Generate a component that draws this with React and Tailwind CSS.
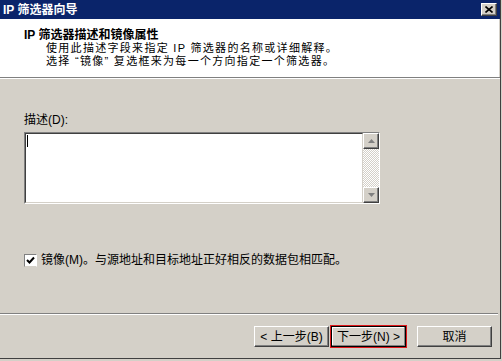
import React from "react";

const raised =
  "border border-t-white border-l-white border-r-[#404040] border-b-[#404040] shadow-[inset_-1px_-1px_#808080] bg-[#d4d0c8]";

const Arrow = ({ up }) => (
  <svg width="7" height="4" viewBox="0 0 7 4">
    <path d={up ? "M3.5 0 L7 4 L0 4 Z" : "M0 0 L7 0 L3.5 4 Z"} fill="#808080" />
  </svg>
);

const WizardButton = ({ children, focused }) => (
  <button
    className={`h-[21px] w-[75px] text-[12px] leading-none text-black flex items-center justify-center ${
      focused
        ? "border border-black outline outline-1 outline-[#e0181c] shadow-[inset_-1px_-1px_#808080,inset_1px_1px_#fff] bg-[#d4d0c8]"
        : raised
    }`}
  >
    {children}
  </button>
);

export default function App() {
  return (
    <div
      className="w-[502px] h-[361px] bg-[#d4d0c8] overflow-hidden"
      style={{ fontFamily: '"Liberation Sans", "Noto Sans CJK SC", sans-serif' }}
    >
      <div className="w-[501px] h-[359px] flex flex-col border-r border-b border-r-[#404040] border-b-[#404040]">
        {/* title bar */}
        <div className="h-[19px] bg-[#0a246a] flex items-center justify-between pl-[3px] pr-[3px]">
          <span className="text-white text-[12px] font-bold leading-none">IP 筛选器向导</span>
          <div className={`w-[16px] h-[13px] flex items-center justify-center ${raised}`}>
            <svg width="8" height="7" viewBox="0 0 8 7">
              <path d="M0.5 0.5 L7.5 6.5 M7.5 0.5 L0.5 6.5" stroke="#000" strokeWidth="1.6" />
            </svg>
          </div>
        </div>

        {/* header */}
        <div className="h-[58px] bg-white pt-[9px] pl-[24px] border-r border-r-[#d4d0c8]">
          <div className="text-[12px] font-bold leading-[14px] text-black">IP 筛选器描述和镜像属性</div>
          <div className="pl-[22px] text-[11px] leading-[13px] tracking-[1.3px] text-black">
            <div>使用此描述字段来指定 IP 筛选器的名称或详细解释。</div>
            <div>选择 “镜像” 复选框来为每一个方向指定一个筛选器。</div>
          </div>
        </div>
        <div className="h-[1px] bg-[#808080]" />
        <div className="h-[1px] bg-white" />

        {/* content */}
        <div className="flex-1 flex flex-col pl-[24px]">
          <div className="mt-[34px] text-[12px] leading-[14px] text-black">描述(D):</div>
          <div className="mt-[5px] w-[356px] h-[72px] bg-white border border-t-[#808080] border-l-[#808080] border-r-white border-b-white flex">
            <div className="flex-1 border border-t-[#404040] border-l-[#404040] border-r-[#d4d0c8] border-b-[#d4d0c8] pl-[1px] pt-[1px]">
              <div className="w-[1px] h-[12px] bg-black" />
            </div>
            <div className="w-[16px] flex flex-col bg-[repeating-conic-gradient(#d4d0c8_0%_25%,#ffffff_0%_50%)] bg-[length:2px_2px]">
              <div className={`h-[16px] flex items-center justify-center ${raised}`}>
                <Arrow up />
              </div>
              <div className="flex-1" />
              <div className={`h-[16px] flex items-center justify-center ${raised}`}>
                <Arrow />
              </div>
            </div>
          </div>

          <div className="mt-[50px] flex items-center gap-[4px]">
            <div className="w-[13px] h-[13px] bg-white border border-t-[#808080] border-l-[#808080] border-r-white border-b-[#d4d0c8] flex items-center justify-center">
              <svg width="9" height="9" viewBox="0 0 9 9">
                <path d="M1 4 L3.5 6.5 L8 1.5" stroke="#000" strokeWidth="2" fill="none" />
              </svg>
            </div>
            <span className="text-[12px] leading-[13px] text-black">镜像(M)。与源地址和目标地址正好相反的数据包相匹配。</span>
          </div>
        </div>

        {/* footer */}
        <div className="h-[1px] bg-[#808080] mr-[2px]" />
        <div className="h-[1px] bg-white mr-[2px]" />
        <div className="h-[43px] flex items-start pt-[11px] pl-[254px]">
          <WizardButton>&lt; 上一步(B)</WizardButton>
          <div className="ml-[2px]">
            <WizardButton focused>下一步(N) &gt;</WizardButton>
          </div>
          <div className="ml-[11px]">
            <WizardButton>取消</WizardButton>
          </div>
        </div>
      </div>
    </div>
  );
}
